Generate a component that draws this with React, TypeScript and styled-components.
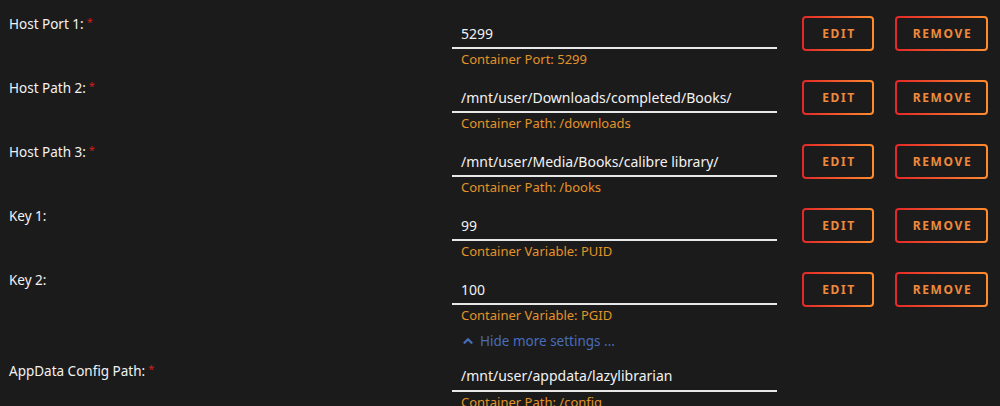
import styled, { createGlobalStyle } from 'styled-components';
import { ChevronUp } from 'lucide-react';

const GlobalStyle = createGlobalStyle`
  html, body {
    margin: 0;
    padding: 0;
    background: #1c1b1b;
  }
  body {
    font-family: "Noto Sans", "Open Sans", sans-serif;
    color: #f2f2f2;
  }
`;

const Page = styled.div`
  width: 1000px;
  height: 406px;
  overflow: hidden;
  padding: 14px 0 0 9px;
  box-sizing: border-box;
`;

const Row = styled.div`
  display: grid;
  grid-template-columns: 443px 325px auto;
  height: 64px;
`;

const Label = styled.div`
  font-size: 13.5px;
  line-height: 18px;
  padding-top: 1px;
`;

const Required = styled.span`
  color: #d41c1c;
  font-size: 11px;
  vertical-align: top;
  position: relative;
  top: -2px;
  margin-left: 3px;
`;

const Value = styled.div`
  padding-top: 6px;
`;

const Input = styled.div<{ $tall?: boolean }>`
  height: ${(p) => (p.$tall ? '28px' : '27px')};
  line-height: ${(p) => (p.$tall ? '28px' : '27px')};
  padding-left: 9px;
  font-size: 14px;
  color: #f2f2f2;
  border-bottom: 2px solid #e8e8e8;
`;

const Hint = styled.div`
  padding-left: 9px;
  font-size: 13px;
  line-height: 21px;
  color: #e2932a;
`;

const Actions = styled.div`
  display: flex;
  gap: 21px;
  padding: 2px 0 0 25px;
`;

const Button = styled.button<{ $wide?: boolean }>`
  width: ${(p) => (p.$wide ? '93px' : '72px')};
  height: 35px;
  border: 2px solid transparent;
  border-radius: 4px;
  background: linear-gradient(#1c1b1b, #1c1b1b) padding-box,
    linear-gradient(90deg, #e22828, #ff8c2f) border-box;
  color: #ef8a3c;
  font-family: "Noto Sans", sans-serif;
  font-size: 12px;
  font-weight: 700;
  letter-spacing: 1.6px;
  padding: 0 0 0 2px;
  cursor: pointer;
`;

const ToggleRow = styled.div`
  display: grid;
  grid-template-columns: 443px 325px;
  height: 28px;
`;

const Toggle = styled.div`
  grid-column: 2;
  display: flex;
  align-items: center;
  gap: 5px;
  padding-left: 9px;
  height: 20px;
  margin-top: -3px;
  font-size: 13.5px;
  color: #486dba;
`;

const LastRow = styled(Row)`
  ${Label} {
    padding-top: 0;
  }
  ${Value} {
    padding-top: 0;
  }
`;

const rows = [
  { label: 'Host Port 1:', req: true, value: '5299', hint: 'Container Port: 5299' },
  { label: 'Host Path 2:', req: true, value: '/mnt/user/Downloads/completed/Books/', hint: 'Container Path: /downloads' },
  { label: 'Host Path 3:', req: true, value: '/mnt/user/Media/Books/calibre library/', hint: 'Container Path: /books' },
  { label: 'Key 1:', req: false, value: '99', hint: 'Container Variable: PUID' },
  { label: 'Key 2:', req: false, value: '100', hint: 'Container Variable: PGID' },
];

export default function App() {
  return (
    <>
      <GlobalStyle />
      <Page>
        {rows.map((r) => (
          <Row key={r.label}>
            <Label>
              {r.label}
              {r.req && <Required>*</Required>}
            </Label>
            <Value>
              <Input>{r.value}</Input>
              <Hint>{r.hint}</Hint>
            </Value>
            <Actions>
              <Button>EDIT</Button>
              <Button $wide>REMOVE</Button>
            </Actions>
          </Row>
        ))}
        <ToggleRow>
          <Toggle>
            <ChevronUp size={14} strokeWidth={4} />
            Hide more settings ...
          </Toggle>
        </ToggleRow>
        <LastRow>
          <Label>
            AppData Config Path:
            <Required>*</Required>
          </Label>
          <Value>
            <Input $tall>/mnt/user/appdata/lazylibrarian</Input>
            <Hint>Container Path: /config</Hint>
          </Value>
        </LastRow>
      </Page>
    </>
  );
}
